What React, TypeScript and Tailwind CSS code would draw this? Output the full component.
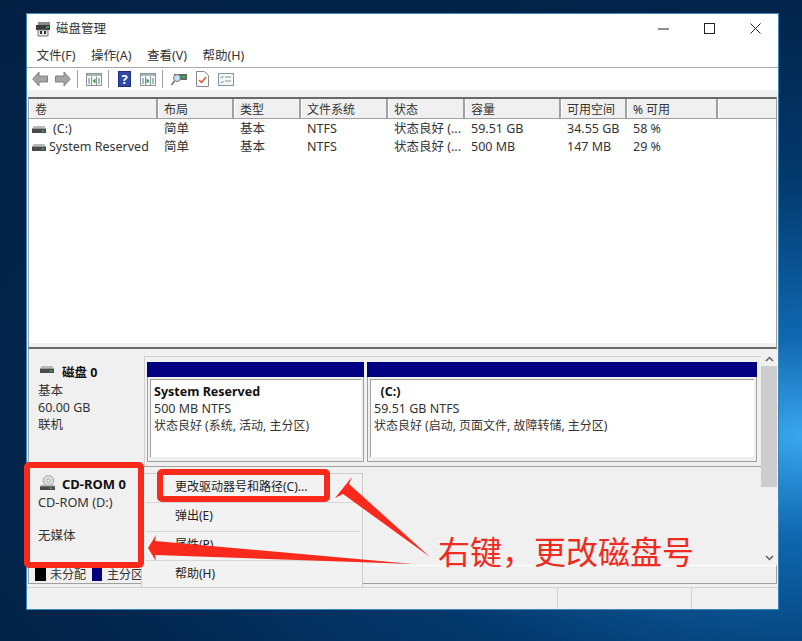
const FONT = '[font-family:"Noto_Sans","Noto_Sans_CJK_SC",sans-serif]';

const COLUMNS = [
  { label: '卷', width: 'w-[129px]' },
  { label: '布局', width: 'w-[76px]' },
  { label: '类型', width: 'w-[67px]' },
  { label: '文件系统', width: 'w-[87px]' },
  { label: '状态', width: 'w-[77px]' },
  { label: '容量', width: 'w-[96px]' },
  { label: '可用空间', width: 'w-[66px]' },
  { label: '% 可用', width: 'w-[91px]' },
  { label: '', width: 'flex-1' },
];

const ROWS = [
  ['(C:)', '简单', '基本', 'NTFS', '状态良好 (...', '59.51 GB', '34.55 GB', '58 %'],
  ['System Reserved', '简单', '基本', 'NTFS', '状态良好 (...', '500 MB', '147 MB', '29 %'],
];

function DriveIcon({ className }: { className?: string }) {
  return (
    <svg viewBox="0 0 16 8" className={className}>
      <path d="M2 0h12l2 3H0z" fill="#b8b8b8" />
      <rect x="0" y="3" width="16" height="5" fill="#4a4a4a" />
      <rect x="11" y="5" width="3" height="1.5" fill="#35c24a" />
    </svg>
  );
}

function TitleIcon() {
  return (
    <svg viewBox="0 0 16 16" className="w-4 h-4">
      <path d="M3 1h12v3H3z" fill="#8a8a8a" />
      <rect x="1" y="4" width="14" height="5" fill="#3c3c3c" />
      <rect x="11" y="5.5" width="3" height="1.5" fill="#35c24a" />
      <path d="M3 9h10v6H3z" fill="#e6e6e6" stroke="#777" strokeWidth="1" />
      <rect x="5" y="10" width="2" height="3" fill="#333" />
      <rect x="9" y="10" width="2" height="3" fill="#333" />
    </svg>
  );
}

function CdIcon() {
  return (
    <svg viewBox="0 0 16 16" className="w-[15px] h-[15px]">
      <circle cx="9" cy="6" r="5.5" fill="#e0e0e0" stroke="#9a9a9a" />
      <circle cx="9" cy="6" r="1.8" fill="#fff" stroke="#9a9a9a" />
      <path d="M2 10h12l2 2H0z" fill="#b8b8b8" />
      <rect x="0" y="12" width="16" height="4" fill="#4a4a4a" />
      <rect x="10" y="13.5" width="3" height="1.2" fill="#35c24a" />
    </svg>
  );
}

function ArrowIcon({ flip }: { flip?: boolean }) {
  return (
    <svg viewBox="0 0 16 16" className={`w-4 h-4 ${flip ? '-scale-x-100' : ''}`}>
      <path d="M7 1 .7 8 7 15v-4h8.5V5H7z" fill="#a4a4a4" stroke="#808080" />
    </svg>
  );
}

function PaneIcon({ right }: { right?: boolean }) {
  return (
    <svg viewBox="0 0 16 13" className="w-4 h-[13px]">
      <rect x="0.5" y="0.5" width="15" height="12" fill="#f4f7f8" stroke="#8a9499" />
      <rect x="1" y="1" width="14" height="2" fill="#a9b6bd" />
      <path d="M5.5 3.5v9M10.5 3.5v9" stroke="#8a9499" />
      {right ? (
        <path d="M6.5 5.5 9.5 8 6.5 10.5z" fill="#2ea043" />
      ) : (
        <path d="M9.5 5.5 6.5 8 9.5 10.5z" fill="#2ea043" />
      )}
      <path d="M2 6h2M2 8h2M2 10h2M12 6h2M12 8h2M12 10h2" stroke="#6f7c83" />
    </svg>
  );
}

function HelpIcon() {
  return (
    <div className={`w-[13px] h-4 bg-[#2f4aa8] border border-[#1c2f7a] text-white font-bold text-[13px] leading-[14px] text-center ${FONT}`}>
      ?
    </div>
  );
}

function Toolbar() {
  const sep = <div className="w-px h-[18px] bg-[#a0a0a0]" />;
  return (
    <div className="h-[22px] flex items-center bg-white pl-[5px] shrink-0">
      <ArrowIcon />
      <div className="w-[7px]" />
      <ArrowIcon flip />
      <div className="w-[6px]" />
      {sep}
      <div className="w-2" />
      <PaneIcon />
      <div className="w-[6px]" />
      {sep}
      <div className="w-[9px]" />
      <HelpIcon />
      <div className="w-[9px]" />
      <PaneIcon right />
      <div className="w-[6px]" />
      {sep}
      <div className="w-2" />
      <svg viewBox="0 0 16 14" className="w-4 h-[14px]">
        <rect x="3" y="2" width="13" height="6" fill="#666" />
        <rect x="11" y="4" width="3" height="2" fill="#35c24a" />
        <circle cx="6" cy="6" r="3.5" fill="#bfe3f5" stroke="#777" />
        <path d="M3.5 9 0.5 13" stroke="#777" strokeWidth="1.6" />
      </svg>
      <div className="w-[9px]" />
      <svg viewBox="0 0 13 16" className="w-[13px] h-4">
        <path d="M.5.5h8l4 4v11H.5z" fill="#fff" stroke="#8a8a8a" />
        <path d="M3 9l2.5 2.5L10 6" fill="none" stroke="#e0522a" strokeWidth="1.5" />
      </svg>
      <div className="w-[9px]" />
      <svg viewBox="0 0 16 13" className="w-4 h-[13px]">
        <rect x=".5" y=".5" width="15" height="12" fill="#f4f7f8" stroke="#8a9499" />
        <path d="M7 4h6M7 8h6" stroke="#8a9499" />
        <path d="M2.5 4l1 1 2-2M2.5 9l1 1 2-2" fill="none" stroke="#3a8fd0" />
      </svg>
    </div>
  );
}

function VolumeList() {
  return (
    <div className="h-[252px] shrink-0 ml-px w-[749px] border-t-2 border-b-2 border-x border-t-[#696969] border-b-[#696969] border-x-[#a0a0a0] bg-[#f0f0f0] flex flex-col">
      <div className="h-[20px] flex border-b border-[#a0a0a0] shrink-0">
        {COLUMNS.map((c, i) => (
          <div
            key={i}
            className={`${c.width} shrink-0 pl-[5px] bg-[#f0f0f0] border-r-2 border-r-[#a0a0a0] border-l border-l-white text-[12px] leading-[21px] text-[#333] whitespace-nowrap last:border-r-0`}
          >
            {c.label}
          </div>
        ))}
      </div>
      <div className="flex-1 bg-white pt-px">
        {ROWS.map((row, r) => (
          <div key={r} className="flex h-[18px] items-center text-[12.5px] text-[#333] whitespace-nowrap">
            {row.map((cell, i) => (
              <div key={i} className={`${COLUMNS[i].width} shrink-0 flex items-center ${i === 0 ? 'pl-[3px]' : 'pl-[6px]'}`}>
                {i === 0 && <DriveIcon className="w-[14px] h-[7px] mr-[3px] shrink-0" />}
                <span className={r === 0 && i === 0 ? 'pl-[4px]' : ''}>{cell}</span>
              </div>
            ))}
          </div>
        ))}
      </div>
      <div className="h-[4px] bg-[#f0f0f0] shrink-0" />
    </div>
  );
}

function Partition({ name, size, status, width }: { name: string; size: string; status: string; width: string }) {
  return (
    <div className={`${width} flex flex-col h-[100px] shrink-0`}>
      <div className="h-[15px] bg-[#000080] shrink-0" />
      <div className="flex-1 bg-[#f0f0f0] border-x border-b border-[#a0a0a0] pt-[2px] px-[2px] pb-[4px]">
        <div className="h-full bg-white border-t border-l border-[#a0a0a0] pl-[3px] pt-[3px] text-[12.5px] leading-[17px] text-[#333] whitespace-pre">
          <div className="font-bold text-[#111]">{name}</div>
          <div>{size}</div>
          <div className="text-[12px]">{status}</div>
        </div>
      </div>
    </div>
  );
}

function DiskPane() {
  return (
    <div className="h-[216px] shrink-0 flex ml-px w-[749px] bg-[#f0f0f0] border-l border-[#a0a0a0]">
      <div className="flex-1 flex flex-col min-w-0">
        <div className="flex h-[118px] pt-[7px] border-b border-[#a0a0a0] shrink-0">
          <div className="w-[115px] shrink-0 pl-[9px] pt-[8px] text-[12.5px] leading-[17px] text-[#333]">
            <div className="flex items-center h-[17px] mb-px">
              <DriveIcon className="w-[14px] h-[7px] ml-[2px] mr-[8px] mb-[6px]" />
              <span className="font-bold text-[#111]">磁盘 0</span>
            </div>
            <div>基本</div>
            <div>60.00 GB</div>
            <div>联机</div>
          </div>
          <div className="flex-1 flex gap-[3px] pl-[2px] pt-[5px] border-l border-t border-[#d0d0d0]">
            <Partition name="System Reserved" size="500 MB NTFS" status="状态良好 (系统, 活动, 主分区)" width="w-[217px]" />
            <Partition name="  (C:)" size="59.51 GB NTFS" status="状态良好 (启动, 页面文件, 故障转储, 主分区)" width="w-[390px]" />
          </div>
        </div>
        <div className="flex-1 pl-[9px] pt-[9px] text-[12.5px] leading-[17px] text-[#333]">
          <div className="flex items-center h-[17px] mb-px">
            <div className="ml-[2px] mr-[7px] mb-[5px]"><CdIcon /></div>
            <span className="font-bold text-[13px] text-[#111]">CD-ROM 0</span>
          </div>
          <div className="text-[12.75px]">CD-ROM (D:)</div>
          <div className="h-[16px]" />
          <div>无媒体</div>
        </div>
      </div>
      <div className="w-[16px] shrink-0 flex flex-col bg-[#f0f0f0] pt-[3px]">
        <div className="h-[14px] flex items-center justify-center">
          <svg viewBox="0 0 9 6" className="w-[9px] h-[6px]"><path d="M1 5l3.5-3.5L8 5" fill="none" stroke="#606060" strokeWidth="1.5" /></svg>
        </div>
        <div className="h-[121px] bg-[#cdcdcd]" />
        <div className="flex-1" />
        <div className="h-[14px] flex items-center justify-center">
          <svg viewBox="0 0 9 6" className="w-[9px] h-[6px]"><path d="M1 1l3.5 3.5L8 1" fill="none" stroke="#606060" strokeWidth="1.5" /></svg>
        </div>
      </div>
    </div>
  );
}

function ContextMenu() {
  const item = 'h-[28px] pb-[2px] flex items-center pl-[33px] text-[12px] text-[#222]';
  const sep = 'h-px ml-[4px] mr-[2px] bg-[#d7d7d7]';
  return (
    <div className="absolute left-[141px] top-[473px] w-[222px] h-[115px] bg-[#f2f2f2] border border-[#cccccc]">
      <div className={item}>更改驱动器号和路径(C)...</div>
      <div className={sep} />
      <div className={item}>弹出(E)</div>
      <div className={sep} />
      <div className={item}>属性(P)</div>
      <div className={sep} />
      <div className={item}>帮助(H)</div>
    </div>
  );
}

export default function App() {
  return (
    <div className={`relative w-[802px] h-[641px] overflow-hidden pl-[26px] pt-[13px] bg-[radial-gradient(ellipse_at_100%_68%,#3aa6ee_0%,#0f68b0_16%,#03386c_42%,#02244a_70%,#021f42_100%)] ${FONT}`}>
      <div className="w-[753px] h-[597px] border border-[#3b88bd] bg-[#f0f0f0] flex flex-col">
        <div className="h-[29px] bg-white flex items-center shrink-0 pl-[8px] text-[12.5px] text-[#333]">
          <TitleIcon />
          <span className="ml-[5px] mt-px">磁盘管理</span>
          <div className="flex-1" />
          <svg viewBox="0 0 11 11" className="w-[11px] h-[11px]"><path d="M0 6h11" stroke="#222" /></svg>
          <div className="w-[35px]" />
          <svg viewBox="0 0 11 11" className="w-[11px] h-[11px]"><rect x=".5" y=".5" width="10" height="10" fill="none" stroke="#222" /></svg>
          <div className="w-[35px]" />
          <svg viewBox="0 0 11 11" className="w-[11px] h-[11px]"><path d="M.5.5l10 10M10.5.5l-10 10" stroke="#222" /></svg>
          <div className="w-[17px]" />
        </div>
        <div className="h-[25px] bg-white border-b border-[#a8a8a8] flex items-center gap-[15.5px] pl-[9.5px] pt-[2px] text-[12.5px] text-[#333] shrink-0">
          <span>文件(F)</span>
          <span>操作(A)</span>
          <span>查看(V)</span>
          <span>帮助(H)</span>
        </div>
        <Toolbar />
        <div className="h-[7px] shrink-0 bg-[#f0f0f0]" />
        <VolumeList />
        <DiskPane />
        <div className="h-[19px] ml-px w-[749px] shrink-0 bg-[#f0f0f0] border-t border-t-white border-b border-b-[#a0a0a0] border-x border-x-[#a0a0a0] flex items-center pl-[6px] text-[12px] text-[#333]">
          <div className="w-[11px] h-[13px] bg-black mr-[4px]" />
          <span>未分配</span>
          <div className="w-[10px] h-[13px] bg-[#000080] ml-[6px] mr-[5px]" />
          <span>主分区</span>
        </div>
        <div className="h-[3px] shrink-0" />
        <div className="flex-1 flex border-t border-[#d4d4d4]">
          <div className="w-[531px] border-r border-[#d4d4d4]" />
          <div className="w-[134px] border-r border-[#d4d4d4]" />
        </div>
      </div>

      <ContextMenu />

      {/* annotations */}
      <div className="absolute left-[24px] top-[462px] w-[120px] h-[106px] rounded-[5px] border-[6px] border-[#f92a1c]" />
      <div className="absolute left-[157px] top-[469px] w-[173px] h-[33px] rounded-[5px] border-[6px] border-[#f92a1c]" />
      <svg viewBox="0 0 802 641" className="absolute inset-0 w-[802px] h-[641px] pointer-events-none">
        <polygon points="352,477 335,498 343,494 430,557 349,484" fill="#f92a1c" />
        <polygon points="148,548 156,535 155,541 413,564 155,555 156,561" fill="#f92a1c" />
      </svg>
      <div className='absolute left-[438px] top-[526px] text-[32px] leading-[48px] text-[#ee2b20] whitespace-nowrap [font-family:"Noto_Sans_CJK_SC",sans-serif]'>
        右键，更改磁盘号
      </div>
    </div>
  );
}
